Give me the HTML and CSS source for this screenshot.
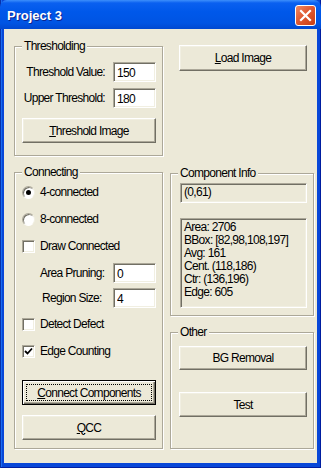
FILE: index.html
```html
<!DOCTYPE html>
<html lang="en">
<head>
    <meta charset="UTF-8">
    <title>Project 3</title>
    <link rel="stylesheet" href="styles.css">
</head>
<body>
    <div class="window">
        <div class="titlebar">
            <span class="title">Project 3</span>
            <button class="close" type="button">
                <svg width="13" height="13" viewBox="0 0 13 13">
                    <path d="M2 2 L11 11 M11 2 L2 11" stroke="#fff" stroke-width="2.2" stroke-linecap="square"/>
                </svg>
            </button>
        </div>
        <div class="client">
            <div class="col col-left">
                <div class="group group-thresh">
                    <span class="legend">Thresholding</span>
                    <div class="fields">
                        <label>Threshold Value:</label>
                        <input class="edit" type="text" value="150">
                        <label>Upper Threshold:</label>
                        <input class="edit" type="text" value="180">
                    </div>
                    <button class="btn btn-thresh" type="button"><u>T</u>hreshold Image</button>
                </div>

                <div class="group group-connect">
                    <span class="legend">Connecting</span>
                    <div class="opt opt-first"><span class="radio on"></span>4-connected</div>
                    <div class="opt"><span class="radio"></span>8-connected</div>
                    <div class="opt"><span class="check"></span>Draw Connected</div>
                    <div class="field field-area">
                        <label>Area Pruning:</label>
                        <input class="edit" type="text" value="0">
                    </div>
                    <div class="field field-region">
                        <label>Region Size:</label>
                        <input class="edit" type="text" value="4">
                    </div>
                    <div class="opt opt-defect"><span class="check"></span>Detect Defect</div>
                    <div class="opt"><span class="check on">
                        <svg width="9" height="9" viewBox="0 0 9 9"><path d="M1 4 L3.5 6.5 L8 1.5" fill="none" stroke="#000" stroke-width="1.8"/></svg>
                    </span>Edge Counting</div>
                    <button class="btn btn-default btn-connect" type="button"><span class="focus"><u>C</u>onnect Components</span></button>
                    <button class="btn btn-qcc" type="button"><u>Q</u>CC</button>
                </div>
            </div>

            <div class="col col-right">
                <button class="btn btn-load" type="button"><u>L</u>oad Image</button>

                <div class="group group-info">
                    <span class="legend">Component Info</span>
                    <div class="readonly single">(0,61)</div>
                    <div class="readonly multi">
                        <div>Area: 2706</div>
                        <div>BBox: [82,98,108,197]</div>
                        <div>Avg: 161</div>
                        <div>Cent. (118,186)</div>
                        <div>Ctr: (136,196)</div>
                        <div>Edge: 605</div>
                    </div>
                </div>

                <div class="group group-other">
                    <span class="legend">Other</span>
                    <button class="btn btn-bg" type="button">BG Removal</button>
                    <button class="btn btn-test" type="button">Test</button>
                </div>
            </div>
        </div>
    </div>
</body>
</html>
```

FILE: styles.css
```css
body {
    margin: 0;
    font-family: "Liberation Sans", Arial, sans-serif;
    font-size: 12px;
    letter-spacing: -0.7px;
    color: #000;
    white-space: nowrap;
}

.window {
    width: 321px;
    height: 468px;
    display: flex;
    flex-direction: column;
    background: #0847d8;
    box-shadow: inset 1px 0 0 #0831a9, inset -1px 0 0 #001ea0, inset 0 -1px 0 #001ea0, inset 2px 0 0 #1a6cf0;
}

.titlebar {
    height: 29px;
    box-sizing: border-box;
    display: flex;
    align-items: center;
    justify-content: space-between;
    padding: 2px 5px 0 7px;
    border-radius: 7px 7px 0 0;
    background: linear-gradient(to bottom, #3d8ffb 0, #0a60f0 3px, #0058ea 40%, #0054e3 80%, #0048d0 100%);
}

.title {
    font-size: 13px;
    font-weight: bold;
    letter-spacing: 0;
    color: #fff;
    text-shadow: 1px 1px 0 #0b2490;
}

.close {
    width: 21px;
    height: 21px;
    padding: 0;
    border: 1px solid #fff;
    border-radius: 3px;
    background: linear-gradient(135deg, #f08a64 0, #e05a33 45%, #c83d12 100%);
    display: flex;
    align-items: center;
    justify-content: center;
}

.client {
    flex: 1;
    margin: 0 4px 5px 4px;
    padding: 0 3px 0 10px;
    background: #ece9d8;
    display: flex;
    gap: 7px;
}

.col {
    display: flex;
    flex-direction: column;
}

.col-left {
    width: 149px;
}

.col-right {
    width: 144px;
}

/* group boxes */
.group {
    position: relative;
    box-sizing: border-box;
    border: 1px solid #aca899;
    box-shadow: inset 1px 1px 0 #fff, 1px 1px 0 #fff;
    display: flex;
    flex-direction: column;
}

.legend {
    position: absolute;
    top: -8px;
    left: 7px;
    padding: 0 2px 0 2px;
    line-height: 14px;
    background: #ece9d8;
}

.group-thresh {
    margin-top: 17px;
    height: 110px;
    padding: 15px 6px 0 7px;
}

.group-connect {
    margin-top: 16px;
    height: 277px;
    padding: 11px 6px 0 7px;
}

.group-info {
    margin-top: 102px;
    height: 143px;
    padding: 9px 6px 0 9px;
}

.group-other {
    margin-top: 16px;
    height: 117px;
    padding: 13px 6px 0 8px;
}

/* edits */
.fields {
    display: grid;
    grid-template-columns: 1fr 43px;
    column-gap: 8px;
    row-gap: 6px;
    align-items: center;
}

.fields label {
    text-align: right;
}

.edit {
    width: 43px;
    height: 20px;
    box-sizing: border-box;
    margin: 0;
    padding: 1px 3px 0;
    font-family: inherit;
    font-size: 12px;
    letter-spacing: inherit;
    background: #fff;
    border: 1px solid;
    border-color: #aca899 #fff #fff #aca899;
    box-shadow: inset 1px 1px 0 #716f64, inset -1px -1px 0 #f1efe2;
    outline: none;
}

.field {
    display: flex;
    align-items: center;
    justify-content: space-between;
    height: 20px;
}

.field-area {
    margin-top: 9px;
    padding-left: 18px;
}

.field-region {
    margin-top: 5px;
    padding-left: 20px;
}

/* radios and checkboxes */
.opt {
    height: 16px;
    display: flex;
    align-items: center;
    gap: 5px;
    margin-top: 11px;
}

.opt-first {
    margin-top: 0;
}

.opt-defect {
    margin-top: 8px;
}

.radio {
    width: 13px;
    height: 13px;
    box-sizing: border-box;
    border-radius: 50%;
    background: #fff;
    border: 1px solid;
    border-color: #aca899 #f1efe2 #fff #aca899;
    box-shadow: inset 1px 1px 0 #716f64;
    display: flex;
    align-items: center;
    justify-content: center;
}

.radio.on::after {
    content: "";
    width: 5px;
    height: 5px;
    border-radius: 50%;
    background: #000;
}

.check {
    width: 13px;
    height: 13px;
    box-sizing: border-box;
    background: #fff;
    border: 1px solid;
    border-color: #aca899 #fff #fff #aca899;
    box-shadow: inset 1px 1px 0 #716f64, inset -1px -1px 0 #f1efe2;
    display: flex;
    align-items: center;
    justify-content: center;
}

/* buttons */
.btn {
    box-sizing: border-box;
    height: 25px;
    margin: 0;
    padding: 0;
    font-family: inherit;
    font-size: 12px;
    letter-spacing: inherit;
    color: #000;
    background: #ece9d8;
    border: 1px solid;
    border-color: #fff #716f64 #716f64 #fff;
    box-shadow: inset -1px -1px 0 #aca899, inset 1px 1px 0 #f1efe2;
}

.btn-thresh {
    margin-top: 10px;
}

.btn-default {
    border: 1px solid #000;
    box-shadow: inset 1px 1px 0 #fff, inset -1px -1px 0 #716f64, inset -2px -2px 0 #aca899;
    padding: 3px;
}

.btn-default .focus {
    display: flex;
    align-items: center;
    justify-content: center;
    height: 100%;
    border: 1px dotted #000;
    box-sizing: border-box;
}

.btn-connect {
    margin-top: 21px;
}

.btn-qcc {
    margin-top: 10px;
}

.btn-load {
    margin: 16px 7px 0 9px;
    height: 26px;
}

.btn-bg {
    height: 24px;
}

.btn-test {
    margin-top: 22px;
}

/* read-only boxes */
.readonly {
    box-sizing: border-box;
    border: 1px solid;
    border-color: #aca899 #fff #fff #aca899;
    box-shadow: inset 1px 1px 0 #716f64, inset -1px -1px 0 #f1efe2;
    padding: 2px 3px;
    line-height: 13px;
}

.single {
    height: 20px;
    padding-top: 2px;
}

.multi {
    margin-top: 15px;
    height: 90px;
    padding-top: 2px;
}
```
